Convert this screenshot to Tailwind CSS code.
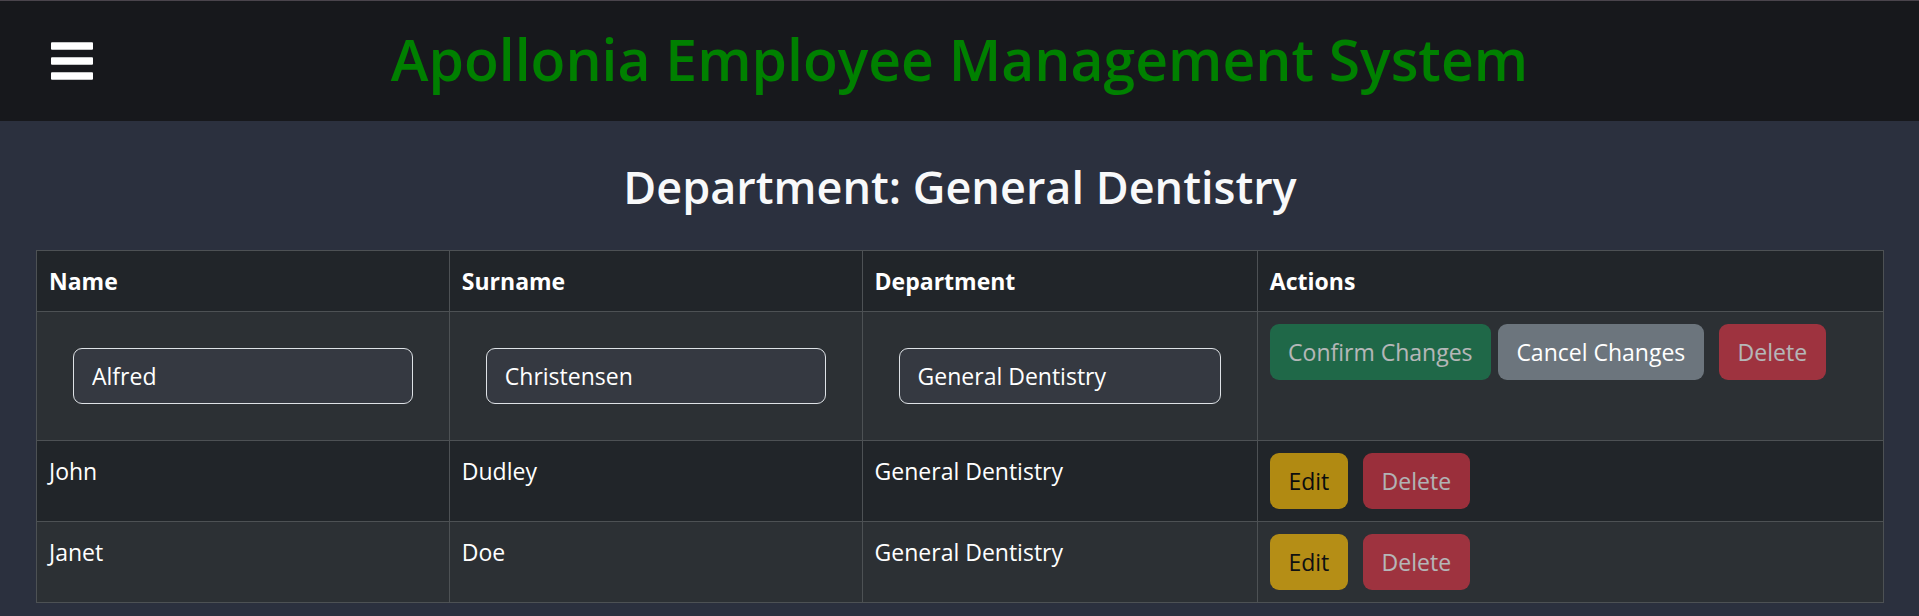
<!DOCTYPE html>
<html lang="en">
<head>
<meta charset="utf-8">
<meta name="viewport" content="width=device-width, initial-scale=1">
<title>Apollonia Employee Management System</title>
<script src="https://cdn.jsdelivr.net/npm/@tailwindcss/browser@4"></script>
</head>
<body class="min-h-screen bg-[#2b303e] font-['Open_Sans','Noto_Sans',sans-serif] text-[23px] leading-9 text-white">
<header class="grid min-h-[121px] grid-cols-[1fr_auto_1fr] items-center border-t border-[#4a444c] bg-[#17181c] px-[51px]">
  <button type="button" aria-label="Open menu" class="w-[42px]">
    <svg viewBox="0 0 42 38" class="h-[38px] w-[42px]" fill="#fff" aria-hidden="true">
      <rect y="0.3" width="42" height="7.4" rx="1"/>
      <rect y="15.3" width="42" height="7.4" rx="1"/>
      <rect y="30.3" width="42" height="7.4" rx="1"/>
    </svg>
  </button>
  <h1 class="pb-1 text-[57px] leading-[72px] font-semibold text-[#008000]">Apollonia Employee Management System</h1>
</header>
<main class="pt-9 pr-[35px] pl-9">
  <h2 class="mb-[33px] text-center text-[45px] leading-[60px] font-semibold text-[#f8f9fa]">Department: General Dentistry</h2>
  <table class="w-full table-fixed border-collapse text-left [&_td]:border [&_td]:border-[#4d5154] [&_td]:p-3 [&_td]:align-top [&_th]:border [&_th]:border-[#4d5154] [&_th]:p-3 [&_th]:font-bold">
    <colgroup>
      <col class="w-[22.35%]"><col class="w-[22.35%]"><col class="w-[21.4%]"><col>
    </colgroup>
    <thead class="bg-[#212529]">
      <tr><th scope="col">Name</th><th scope="col">Surname</th><th scope="col">Department</th><th scope="col">Actions</th></tr>
    </thead>
    <tbody>
      <tr class="bg-[#2c3034]">
        <td><div class="p-6"><input type="text" aria-label="Name" value="Alfred" class="block h-14 w-full rounded-[9px] border border-[#dee2e6] bg-[#353941] px-[18px]"></div></td>
        <td><div class="p-6"><input type="text" aria-label="Surname" value="Christensen" class="block h-14 w-full rounded-[9px] border border-[#dee2e6] bg-[#353941] px-[18px]"></div></td>
        <td><div class="p-6"><input type="text" aria-label="Department" value="General Dentistry" class="block h-14 w-full rounded-[9px] border border-[#dee2e6] bg-[#353941] px-[18px]"></div></td>
        <td>
          <div class="flex">
            <button type="button" disabled class="h-14 w-[221px] rounded-[9px] bg-[#198754] opacity-65">Confirm Changes</button>
            <button type="button" class="ml-[7px] h-14 w-[206px] rounded-[9px] bg-[#6c757d]">Cancel Changes</button>
            <button type="button" disabled class="ml-[15px] h-14 w-[107px] rounded-[9px] bg-[#dc3545] opacity-65">Delete</button>
          </div>
        </td>
      </tr>
      <tr class="bg-[#212529]">
        <td>John</td><td>Dudley</td><td>General Dentistry</td>
        <td>
          <div class="flex">
            <button type="button" disabled class="h-14 w-[78px] rounded-[9px] bg-[#ffc107] text-black opacity-65">Edit</button>
            <button type="button" disabled class="ml-[15px] h-14 w-[107px] rounded-[9px] bg-[#dc3545] opacity-65">Delete</button>
          </div>
        </td>
      </tr>
      <tr class="bg-[#2c3034]">
        <td>Janet</td><td>Doe</td><td>General Dentistry</td>
        <td>
          <div class="flex">
            <button type="button" disabled class="h-14 w-[78px] rounded-[9px] bg-[#ffc107] text-black opacity-65">Edit</button>
            <button type="button" disabled class="ml-[15px] h-14 w-[107px] rounded-[9px] bg-[#dc3545] opacity-65">Delete</button>
          </div>
        </td>
      </tr>
    </tbody>
  </table>
</main>
</body>
</html>
